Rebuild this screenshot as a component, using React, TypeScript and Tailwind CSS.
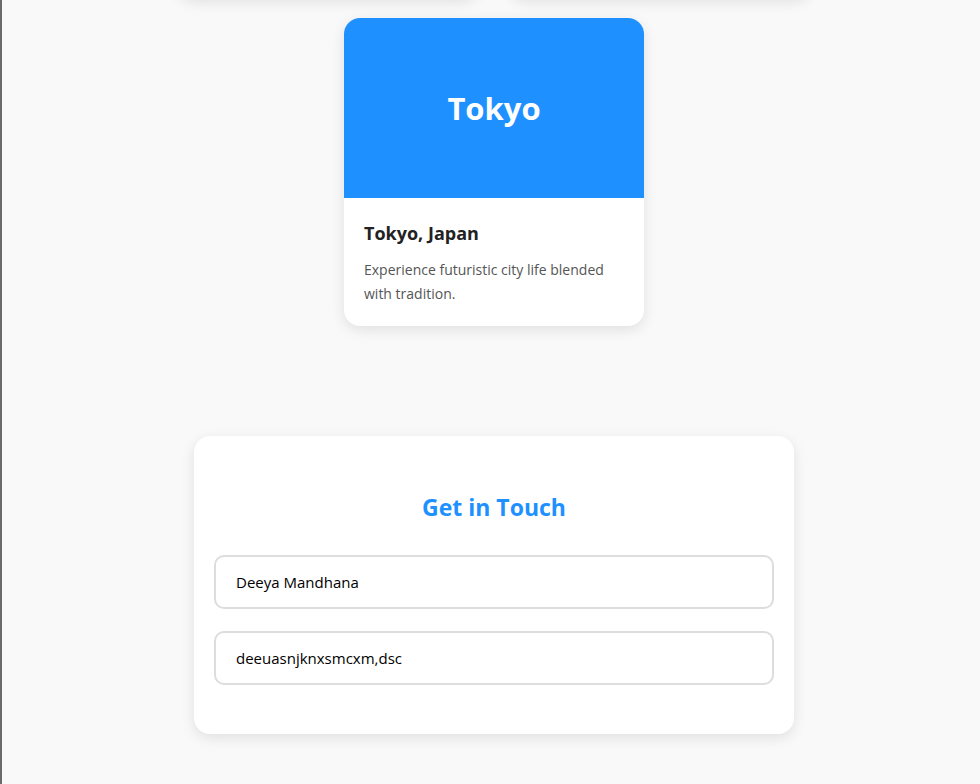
import React from 'react';

const cardFont = { fontFamily: '"Open Sans", "Noto Sans", sans-serif' };

const App = () => {
  return (
    <div className="min-h-[784px] overflow-hidden border-l-2 border-[#6b6b6b] bg-[#f9f9f9] pl-[6px]" style={cardFont}>
      {/* Destinations (first row scrolled out of view) */}
      <div className="mx-auto -mt-[310px] flex w-[640px] flex-wrap justify-center gap-x-8 gap-y-5">
        <div className="h-[308px] w-[300px] rounded-2xl bg-white shadow-[0_4px_14px_rgba(0,0,0,0.1)]" />
        <div className="h-[308px] w-[300px] rounded-2xl bg-white shadow-[0_4px_14px_rgba(0,0,0,0.1)]" />
        <div className="w-[300px] overflow-hidden rounded-2xl bg-white shadow-[0_4px_14px_rgba(0,0,0,0.1)]">
          <div className="flex h-[180px] items-center justify-center bg-[#1e90ff]">
            <h2 className="text-[31px] font-bold text-white">Tokyo</h2>
          </div>
          <div className="px-5 pb-[20px] pt-[23px]">
            <h3 className="text-[18px] font-bold leading-6 text-[#222]">Tokyo, Japan</h3>
            <p className="mt-[13px] text-[14px] leading-6 text-[#555]">
              Experience futuristic city life blended with tradition.
            </p>
          </div>
        </div>
      </div>

      {/* Contact */}
      <div className="mx-auto mt-[110px] w-[600px] rounded-2xl bg-white px-5 pb-[49px] pt-[55px] shadow-[0_4px_14px_rgba(0,0,0,0.1)]">
        <h2 className="mb-8 text-center text-[23px] font-bold leading-8 text-[#1e90ff]">Get in Touch</h2>
        <div className="flex flex-col gap-[22px]">
          <input
            defaultValue="Deeya Mandhana"
            className="h-[54px] w-full rounded-[10px] border-2 border-[#ddd] px-5 text-[15px] text-black outline-none"
          />
          <input
            defaultValue="deeuasnjknxsmcxm,dsc"
            className="h-[54px] w-full rounded-[10px] border-2 border-[#ddd] px-5 text-[15px] text-black outline-none"
          />
        </div>
      </div>
    </div>
  );
};

export default App;
